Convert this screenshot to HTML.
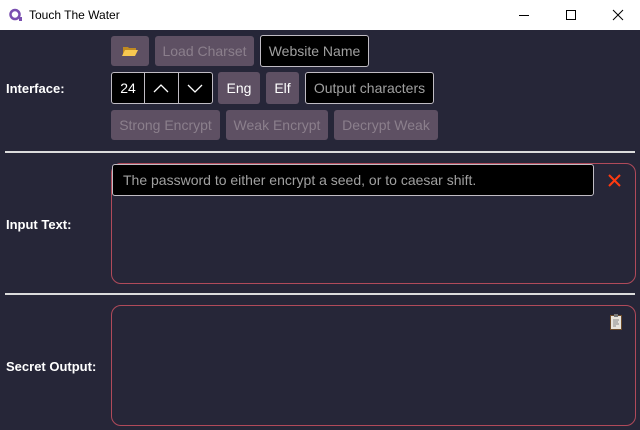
<!DOCTYPE html><html><head><style>
*{margin:0;padding:0;box-sizing:border-box}
body{width:640px;height:430px;background:#262638;font-family:"Liberation Sans",sans-serif;position:relative;overflow:hidden}
.t{position:absolute;left:0;top:0;width:640px;height:30px;background:#fff;color:#000;font-size:12px}
.a{position:absolute;display:flex;align-items:center;justify-content:center;font-size:14px;border-radius:3px}
.b{background:#5e5063;color:#8b7f8c}
.e{background:#5e5063;color:#fff}
.k{background:#000;border:1px solid #c0bcc4;color:#a0a0a0}
.l{position:absolute;left:6px;color:#fff;font-weight:bold;font-size:13px}
.h{position:absolute;left:5px;width:630px;height:2px;background:#dcdcdc}
.x{position:absolute;border:1px solid #b04a5a;border-radius:10px}
</style></head><body>
<div class="t"><svg style="position:absolute;left:9px;top:8px" width="14" height="14"><circle cx="6" cy="6.5" r="4.5" fill="none" stroke="#7a4fb0" stroke-width="2.5"/><rect x="10" y="9" width="3" height="4" fill="#7a4fb0"/></svg><span style="position:absolute;left:29px;top:8px">Touch The Water</span>
<svg style="position:absolute;left:519px;top:9px" width="110" height="12" stroke="#000" fill="none"><path d="M0 6.5h10"/><rect x="47.5" y="1.5" width="9" height="9"/><path d="M94 1l10 10M104 1l-10 10"/></svg></div>
<div class="a b" style="left:111px;top:36px;width:38px;height:30px"><svg width="16" height="12"><path d="M1 2h5l1 1h7v3H4L1 11z" fill="#c08a20"/><path d="M3 5h13l-3 6H0z" fill="#f8c850"/></svg></div>
<div class="a b" style="left:155px;top:36px;width:99px;height:30px">Load Charset</div>
<div class="a k" style="left:260px;top:35px;width:109px;height:32px">Website Name</div>
<div class="a k" style="left:111px;top:72px;width:102px;height:32px;justify-content:flex-start;color:#fff"><span style="width:33px;text-align:center">24</span><span style="width:34px;height:30px;border-left:1px solid #c0bcc4"><svg width="33" height="30"><path d="M9 19l7-7 7 7" stroke="#fff" fill="none" stroke-width="1.3"/></svg></span><span style="width:34px;height:30px;border-left:1px solid #c0bcc4"><svg width="33" height="30"><path d="M9 12l7 7 7-7" stroke="#fff" fill="none" stroke-width="1.3"/></svg></span></div>
<div class="a e" style="left:218px;top:72px;width:42px;height:32px">Eng</div>
<div class="a e" style="left:266px;top:72px;width:33px;height:32px">Elf</div>
<div class="a k" style="left:305px;top:72px;width:129px;height:32px">Output characters</div>
<div class="a b" style="left:111px;top:110px;width:109px;height:30px">Strong Encrypt</div>
<div class="a b" style="left:226px;top:110px;width:102px;height:30px">Weak Encrypt</div>
<div class="a b" style="left:334px;top:110px;width:104px;height:30px">Decrypt Weak</div>
<div class="l" style="top:81px">Interface:</div>
<div class="h" style="top:151px"></div>
<div class="x" style="left:111px;top:163px;width:525px;height:121px"></div>
<div class="a k" style="left:112px;top:164px;width:482px;height:32px;justify-content:flex-start;padding-left:10px;color:#a0a0a0">The password to either encrypt a seed, or to caesar shift.</div>
<svg style="position:absolute;left:608px;top:174px" width="13" height="13"><path d="M1 1l11 11M12 1L1 12" stroke="#ff3a10" stroke-width="2"/></svg>
<div class="l" style="top:217px">Input Text:</div>
<div class="h" style="top:293px"></div>
<div class="x" style="left:111px;top:305px;width:525px;height:121px"></div>
<svg style="position:absolute;left:610px;top:314px" width="12" height="16"><rect x="0.5" y="1.5" width="11" height="14" fill="#e8e4dc" stroke="#6a4a2a"/><rect x="4" y="0" width="4" height="3" fill="#777"/><path d="M3 6h6M3 8h5M3 10h6M3 12h3" stroke="#888"/></svg>
<div class="l" style="top:359px">Secret Output:</div>
</body></html>
